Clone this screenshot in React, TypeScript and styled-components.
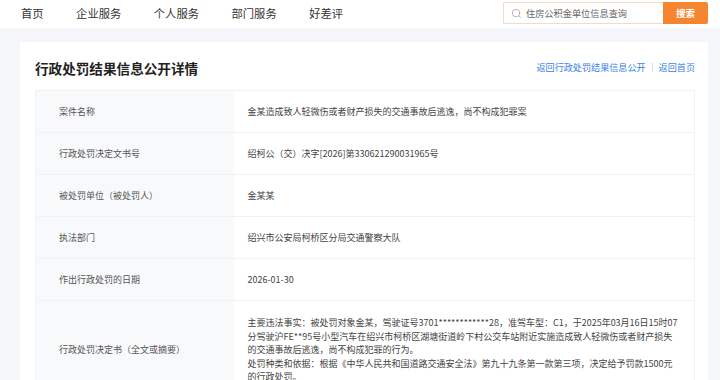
import styled, { createGlobalStyle } from "styled-components";
import { Search } from "lucide-react";

const GlobalStyle = createGlobalStyle`
  html, body {
    margin: 0;
    padding: 0;
    overflow: hidden;
    background: #f4f6f9;
    font-family: "Noto Sans CJK SC", "Noto Sans", sans-serif;
    color: #333;
  }
`;

const TopBar = styled.header`
  height: 28px;
  background: #fff;
  display: flex;
  align-items: center;
  justify-content: space-between;
  padding: 0 12px 0 21px;
`;

const Nav = styled.nav`
  display: flex;
  gap: 32.5px;
`;

const NavItem = styled.a`
  font-size: 11.3px;
  color: #333;
  text-decoration: none;
  line-height: 1;
`;

const SearchBox = styled.div`
  display: flex;
  width: 205px;
  height: 22px;
  margin-top: -2px;
`;

const SearchInput = styled.div`
  flex: 1;
  display: flex;
  align-items: center;
  gap: 4px;
  padding-left: 7px;
  border: 1px solid #f3dcc6;
  border-right: none;
  border-radius: 2px 0 0 2px;
  font-size: 9.2px;
  color: #666;
`;

const SearchButton = styled.button`
  width: 45px;
  border: none;
  background: #f5852e;
  color: #fff;
  font-size: 9.5px;
  font-weight: bold;
  font-family: inherit;
  border-radius: 0 2px 2px 0;
  padding: 0;
`;

const Main = styled.main`
  padding: 14px 12px 0 20px;
`;

const Card = styled.section`
  background: #fff;
  padding: 0 13px 0 15px;
`;

const CardHeader = styled.div`
  height: 48px;
  padding-top: 4px;
  box-sizing: border-box;
  display: flex;
  align-items: center;
  justify-content: space-between;
`;

const Title = styled.h1`
  margin: 0;
  font-size: 13.6px;
  font-weight: bold;
  color: #222;
`;

const Links = styled.div`
  display: flex;
  align-items: center;
  gap: 6px;
  font-size: 9.1px;
  margin-top: -2px;
`;

const LinkItem = styled.a`
  color: #3b7fe3;
  text-decoration: none;
`;

const Divider = styled.span`
  width: 1px;
  height: 9px;
  background: #d8dde6;
`;

const Table = styled.table`
  width: 100%;
  border-collapse: collapse;
  border: 1px solid #f0f2f5;
  font-size: 9px;
`;

const Row = styled.tr`
  border-bottom: 1px solid #f0f2f5;
`;

const Label = styled.td`
  width: 198px;
  height: 42px;
  box-sizing: border-box;
  padding: 0 0 0 23px;
  background: #f8f9fb;
  color: #555;
  vertical-align: middle;
`;

const Value = styled.td<{ $multi?: boolean }>`
  padding: ${({ $multi }) => ($multi ? "15px 14px 15px 14px" : "0 14px 0 14px")};
  color: #444;
  line-height: 13.5px;
  vertical-align: middle;
`;

const rows: [string, string][] = [
  ["案件名称", "金某造成致人轻微伤或者财产损失的交通事故后逃逸，尚不构成犯罪案"],
  ["行政处罚决定文书号", "绍柯公（交）决字[2026]第330621290031965号"],
  ["被处罚单位（被处罚人）", "金某某"],
  ["执法部门", "绍兴市公安局柯桥区分局交通警察大队"],
  ["作出行政处罚的日期", "2026-01-30"],
];

export default function App() {
  return (
    <>
      <GlobalStyle />
      <TopBar>
        <Nav>
          <NavItem>首页</NavItem>
          <NavItem>企业服务</NavItem>
          <NavItem>个人服务</NavItem>
          <NavItem>部门服务</NavItem>
          <NavItem>好差评</NavItem>
        </Nav>
        <SearchBox>
          <SearchInput>
            <Search size={11} strokeWidth={1.6} color="#9a9a9a" />
            住房公积金单位信息查询
          </SearchInput>
          <SearchButton>搜索</SearchButton>
        </SearchBox>
      </TopBar>
      <Main>
        <Card>
          <CardHeader>
            <Title>行政处罚结果信息公开详情</Title>
            <Links>
              <LinkItem>返回行政处罚结果信息公开</LinkItem>
              <Divider />
              <LinkItem>返回首页</LinkItem>
            </Links>
          </CardHeader>
          <Table>
            <tbody>
              {rows.map(([label, value]) => (
                <Row key={label}>
                  <Label>{label}</Label>
                  <Value>{value}</Value>
                </Row>
              ))}
              <Row>
                <Label>行政处罚决定书（全文或摘要）</Label>
                <Value $multi>
                  主要违法事实：被处罚对象金某，驾驶证号3701************28，准驾车型：C1，于2025年03月16日15时07分驾驶沪FE**95号小型汽车在绍兴市柯桥区湖塘街道岭下村公交车站附近实施造成致人轻微伤或者财产损失的交通事故后逃逸，尚不构成犯罪的行为。
                  <br />
                  处罚种类和依据：根据《中华人民共和国道路交通安全法》第九十九条第一款第三项，决定给予罚款1500元的行政处罚。
                </Value>
              </Row>
            </tbody>
          </Table>
        </Card>
      </Main>
    </>
  );
}
